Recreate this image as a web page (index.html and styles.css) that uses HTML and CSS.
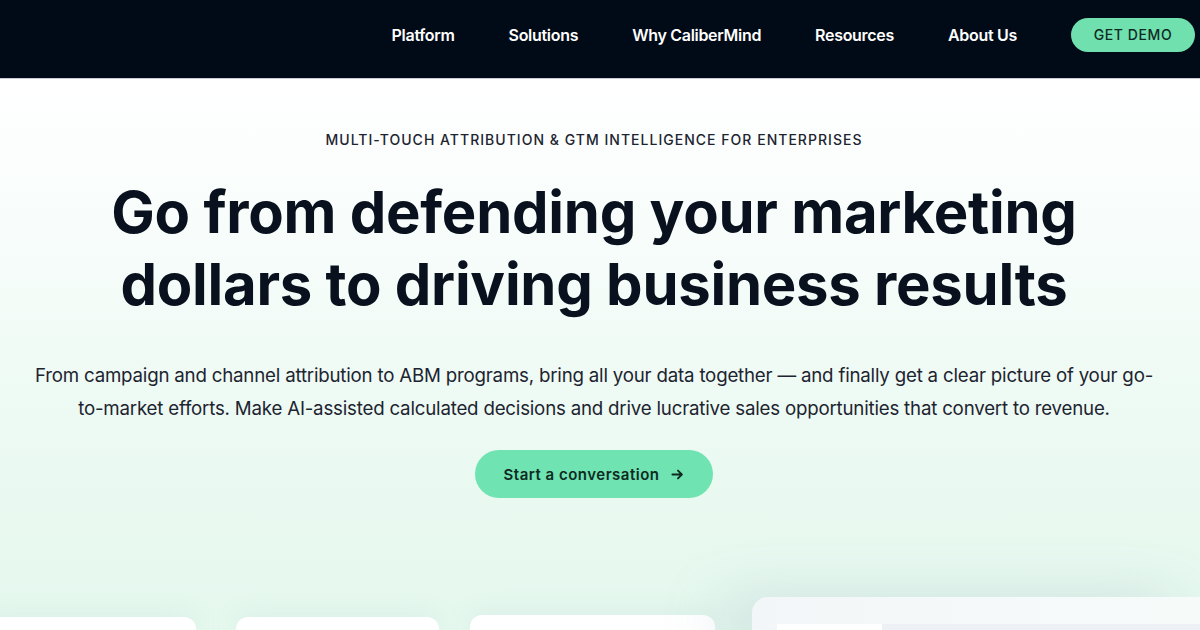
FILE: index.html
```html
<!DOCTYPE html>
<html lang="en">
<head>
<meta charset="utf-8">
<title>CaliberMind</title>
<link rel="stylesheet" href="styles.css">
</head>
<body>
<header class="nav">
  <nav class="nav-links">
    <a class="nav-link" href="#">Platform</a>
    <a class="nav-link" href="#">Solutions</a>
    <a class="nav-link" href="#">Why CaliberMind</a>
    <a class="nav-link" href="#">Resources</a>
    <a class="nav-link" href="#">About Us</a>
  </nav>
  <a class="demo-btn" href="#">GET DEMO</a>
</header>
<main class="hero">
  <div class="hero-inner">
    <p class="eyebrow">MULTI-TOUCH ATTRIBUTION &amp; GTM INTELLIGENCE FOR ENTERPRISES</p>
    <h1 class="headline">Go from defending your marketing<br>dollars to driving business results</h1>
    <p class="lead">From campaign and channel attribution to ABM programs, bring all your data together — and finally get a clear picture of your go-<br>to-market efforts. Make AI-assisted calculated decisions and drive lucrative sales opportunities that convert to revenue.</p>
    <a class="cta" href="#">Start a conversation
      <svg class="cta-arrow" viewBox="0 0 14 14" width="13" height="13" aria-hidden="true"><path d="M1.5 7h10M7.5 2.8L11.7 7l-4.2 4.2" fill="none" stroke="currentColor" stroke-width="2" stroke-linecap="round" stroke-linejoin="round"/></svg>
    </a>
  </div>
  <div class="cards">
    <div class="card card-1"></div>
    <div class="card card-2"></div>
    <div class="card card-3"></div>
    <div class="panel">
      <div class="panel-row">
        <div class="panel-tab"></div>
        <div class="panel-strip"></div>
      </div>
    </div>
  </div>
</main>
</body>
</html>
```
FILE: styles.css
```css
* { box-sizing: border-box; }
html, body { margin: 0; padding: 0; }
body {
  width: 1200px;
  height: 630px;
  overflow: hidden;
  font-family: "Inter", "Open Sans", sans-serif;
  color: #0b1320;
  background: #fff;
}
a { text-decoration: none; color: inherit; }

.nav {
  height: 79px;
  background: #010b17;
  display: flex;
  align-items: center;
  justify-content: flex-end;
  padding: 0 5px 9px 0;
  border-bottom: 1px solid #c9cdd2;
}
.nav-links {
  display: flex;
  gap: 54px;
  margin-right: 54px;
}
.nav-link {
  color: #fff;
  font-size: 16px;
  font-weight: 600;
  letter-spacing: -0.3px;
}
.demo-btn {
  width: 124px;
  height: 34px;
  border-radius: 17px;
  background: #6fe0ae;
  color: #0d2a22;
  font-size: 14px;
  font-weight: 500;
  letter-spacing: 0.6px;
  display: flex;
  align-items: center;
  justify-content: center;
}

.hero {
  height: 551px;
  background: linear-gradient(180deg, #ffffff 0%, #f5fcf9 35%, #eaf9f1 70%, #e5f8ee 100%);
  display: flex;
  flex-direction: column;
  justify-content: space-between;
  overflow: hidden;
}
.hero-inner {
  padding: 52px 12px 0 0;
  display: flex;
  flex-direction: column;
  align-items: center;
  text-align: center;
}
.eyebrow {
  margin: 0;
  font-size: 14px;
  line-height: 18px;
  letter-spacing: 1.02px;
  font-weight: 500;
  color: #1c2430;
}
.headline {
  margin: 27px 0 0;
  font-size: 58px;
  line-height: 72px;
  font-weight: 700;
  letter-spacing: -0.25px;
  color: #08111d;
}
.lead {
  margin: 39px 0 0;
  width: 1180px;
  font-size: 18.7px;
  line-height: 33px;
  font-weight: 400;
  color: #1d2430;
  letter-spacing: -0.2px;
}
.cta {
  margin-top: 25px;
  width: 238px;
  height: 48px;
  border-radius: 24px;
  background: #6fe3b1;
  color: #0e2a22;
  font-size: 15px;
  font-weight: 600;
  letter-spacing: 0.5px;
  display: flex;
  align-items: center;
  justify-content: center;
  gap: 12px;
}
.cta-arrow { display: block; }

.cards {
  display: flex;
  align-items: flex-end;
  height: 34px;
}
.card {
  background: #fff;
  border-radius: 12px 12px 0 0;
  height: 13px;
  box-shadow: 0 0 24px rgba(140, 175, 190, 0.18);
}
.card-1 { width: 222px; margin-left: -20px; }
.card-2 { width: 209px; margin-left: 40px; }
.card-3 { width: 253px; margin-left: 31px; height: 15px; }
.panel {
  width: 460px;
  margin-left: 37px;
  height: 33px;
  border-radius: 16px 0 0 0;
  background: linear-gradient(90deg, #f2f6f8 0%, #f6fbfa 100%);
  box-shadow: -30px 10px 60px rgba(120, 150, 175, 0.35);
  padding: 27px 0 0 25px;
}
.panel-row { display: flex; height: 6px; }
.panel-tab { width: 105px; background: #ffffff; }
.panel-strip { flex: 1; background: #edf1f6; }
```
